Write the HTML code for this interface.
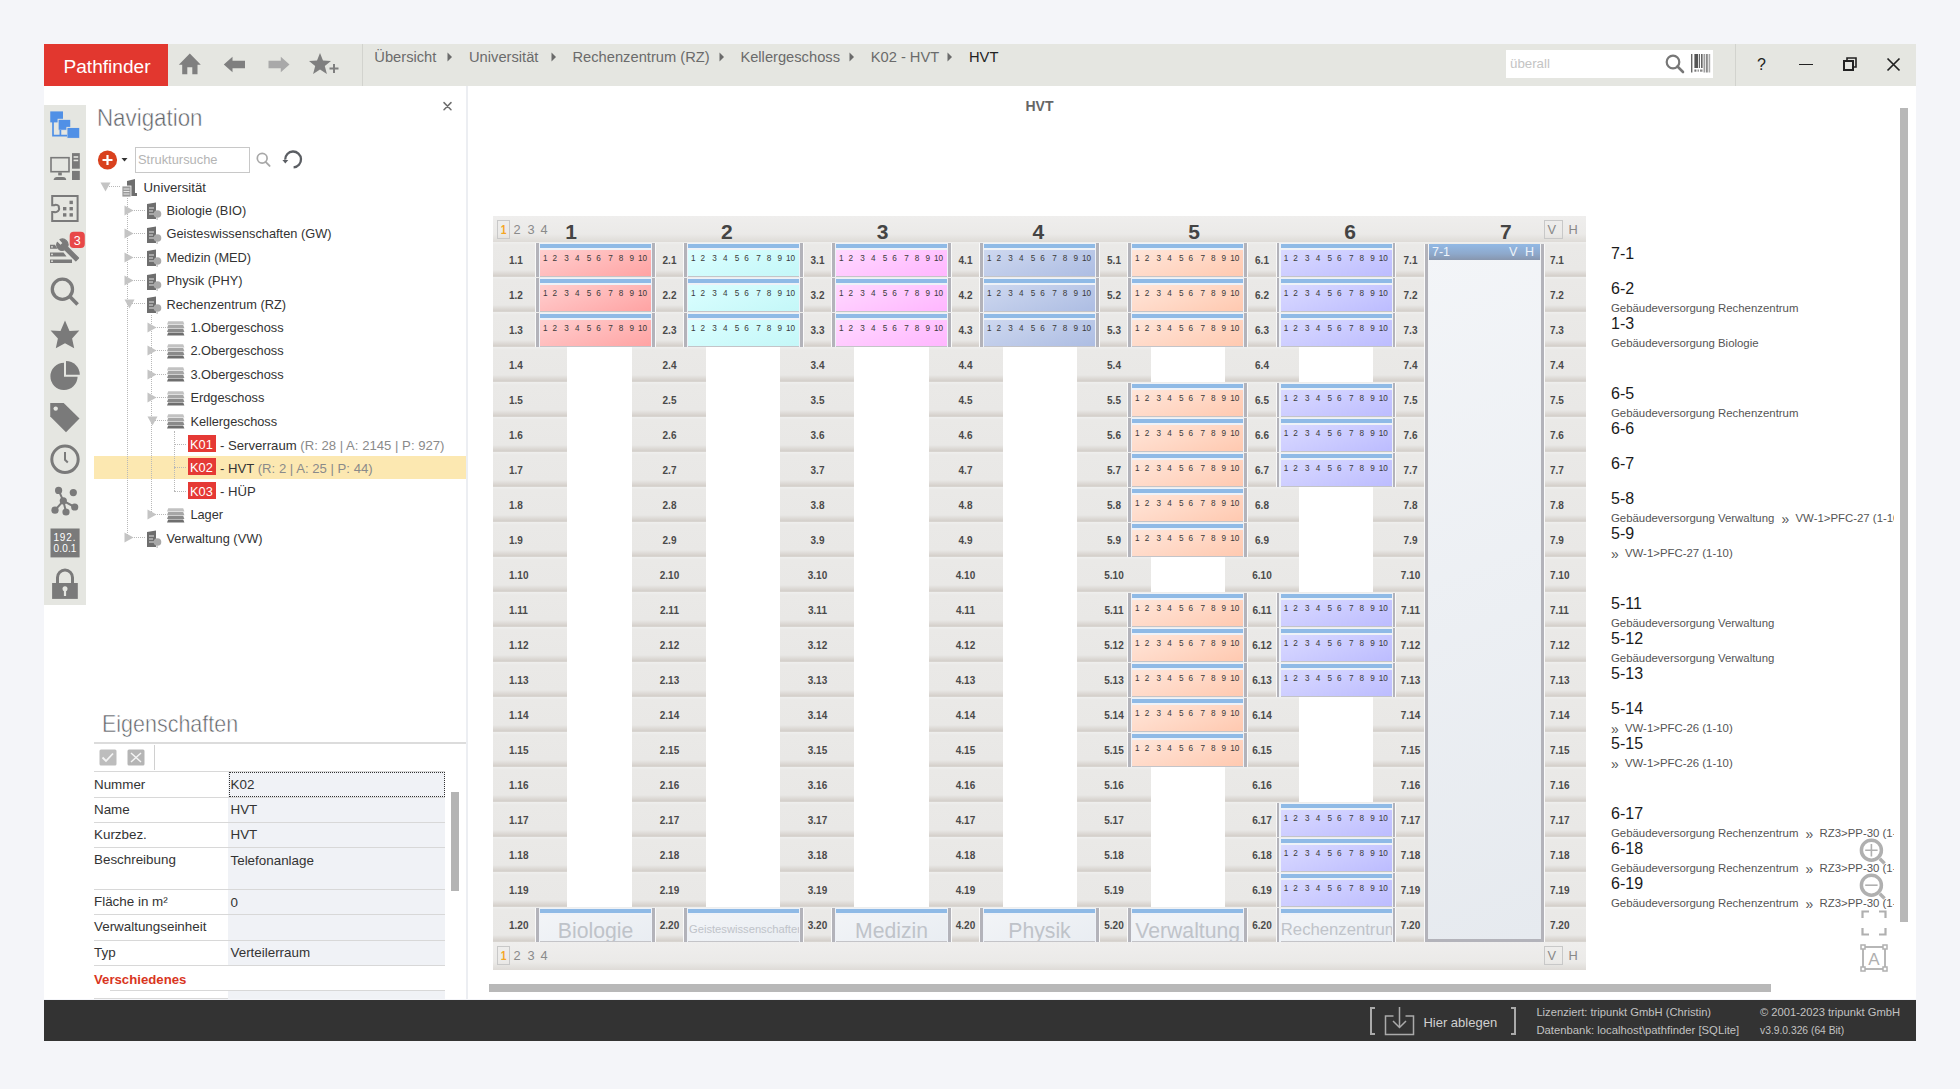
<!DOCTYPE html><html><head><meta charset="utf-8"><title>Pathfinder</title><style>
*{box-sizing:border-box;margin:0;padding:0}
html,body{width:1960px;height:1089px;overflow:hidden;background:#f4f5f9;font-family:"Liberation Sans",sans-serif;color:#333}
.a{position:absolute}
.t{position:absolute;white-space:nowrap;line-height:1}
.row{position:absolute;left:493px;width:1093px;height:35px;background:linear-gradient(#efefee 0px,#eae9e7 3px,#e9e8e6 28px,#d4cfca 34px,#dcdad6 35px)}
.wh{position:absolute;height:35px;background:#fff}
.pn{position:absolute;width:119px;height:35px}
.pn .bg{position:absolute;left:2.5px;top:0.5px;width:113.5px;height:34.5px;background:#eef2f8}
.pn .lb{position:absolute;left:0;top:1px;width:2.5px;height:34px;background:#b3b3ba;box-shadow:-1px 0 0 #fafafa}
.pn .rb{position:absolute;left:116px;top:1px;width:2.5px;height:34px;background:#b3b3ba;box-shadow:1px 0 0 #fafafa}
.pn .bar{position:absolute;left:4px;top:2px;width:111px;height:4.2px;background:#8fbae6}
.pn .body{position:absolute;left:4px;top:7.5px;width:111px;height:27px;border-bottom:1px solid #c4c4c8}
.pn .n{position:absolute;top:13px;font-size:8.2px;line-height:1;color:#3a3a3a;width:10px;text-align:center;margin-left:-5px}
.lbl{position:absolute;font-size:10px;font-weight:bold;color:#4a4a4a;line-height:1;white-space:nowrap}
.rq{font-size:14px;position:relative;top:1.5px;margin:0 3px 0 4px;line-height:0}</style></head><body><div class="a" style="left:44px;top:44px;width:1872px;height:42px;background:#e5e6e1"></div><div class="a" style="left:44px;top:44px;width:124px;height:42px;background:#e2372f"></div><div class="t" style="left:63.5px;top:57px;font-size:19.1px;color:#fff">Pathfinder</div><div class="a" style="left:44px;top:86px;width:422px;height:913px;background:#fff"></div><div class="a" style="left:466px;top:86px;width:1450px;height:913px;background:#fff;border-left:2px solid #eceef2"></div><div class="a" style="left:44px;top:999.6px;width:1872px;height:41.6px;background:#333"></div><svg class="a" style="left:178px;top:53px" width="24" height="23" viewBox="0 0 24 23"><path d="M0.8 11.8 L11.8 0.6 L22.8 11.8 L19.5 11.8 L19.5 21.3 L14.3 21.3 L14.3 14.3 L9.3 14.3 L9.3 21.3 L4.2 21.3 L4.2 11.8 Z" fill="#7f7f7f"/></svg><svg class="a" style="left:223px;top:55px" width="24" height="18" viewBox="0 0 24 18"><path d="M0.8 9.5 L9.5 1.8 L9.5 5.8 L22 5.8 L22 13.2 L9.5 13.2 L9.5 17.2 Z" fill="#7f7f7f"/></svg><svg class="a" style="left:268px;top:55px" width="24" height="18" viewBox="0 0 24 18"><path d="M21.5 9.5 L12.8 1.8 L12.8 5.8 L0.5 5.8 L0.5 13.2 L12.8 13.2 L12.8 17.2 Z" fill="#a9a9a9"/></svg><svg class="a" style="left:309px;top:52px" width="32" height="24" viewBox="0 0 32 24"><path d="M11 1 L14 8.6 L22 9 L15.8 14.1 L17.9 22 L11 17.6 L4.1 22 L6.2 14.1 L0 9 L8 8.6 Z" fill="#7f7f7f"/><path d="M20.5 16.5 h9 M25 12 v9" stroke="#7f7f7f" stroke-width="2"/></svg><div class="a" style="left:362px;top:44px;width:1px;height:42px;background:#d2d3ce"></div><div class="t" style="left:374.3px;top:49.5px;font-size:14.7px;color:#6b6b6b">Übersicht</div><svg class="a" style="left:447px;top:52px" width="6" height="10"><path d="M0.5 0.5 L5 5 L0.5 9.5Z" fill="#6b6b6b"/></svg><div class="t" style="left:469px;top:49.5px;font-size:14.7px;color:#6b6b6b">Universität</div><svg class="a" style="left:551px;top:52px" width="6" height="10"><path d="M0.5 0.5 L5 5 L0.5 9.5Z" fill="#6b6b6b"/></svg><div class="t" style="left:572.5px;top:49.5px;font-size:14.7px;color:#6b6b6b">Rechenzentrum (RZ)</div><svg class="a" style="left:718.7px;top:52px" width="6" height="10"><path d="M0.5 0.5 L5 5 L0.5 9.5Z" fill="#6b6b6b"/></svg><div class="t" style="left:740.4px;top:49.5px;font-size:14.7px;color:#6b6b6b">Kellergeschoss</div><svg class="a" style="left:849px;top:52px" width="6" height="10"><path d="M0.5 0.5 L5 5 L0.5 9.5Z" fill="#6b6b6b"/></svg><div class="t" style="left:870.7px;top:49.5px;font-size:14.7px;color:#6b6b6b">K02 - HVT</div><svg class="a" style="left:947px;top:52px" width="6" height="10"><path d="M0.5 0.5 L5 5 L0.5 9.5Z" fill="#6b6b6b"/></svg><div class="t" style="left:969px;top:49.5px;font-size:14.7px;color:#222">HVT</div><div class="a" style="left:1506px;top:50px;width:207px;height:28px;background:#fff"></div><div class="t" style="left:1510px;top:57px;font-size:13.3px;color:#c4c4c4">überall</div><svg class="a" style="left:1665px;top:54px" width="22" height="20" viewBox="0 0 22 20"><circle cx="8" cy="8" r="6.3" fill="none" stroke="#777" stroke-width="2.2"/><path d="M12.5 12.5 L18 18" stroke="#777" stroke-width="2.6" stroke-linecap="round"/></svg><svg class="a" style="left:1690.8px;top:53.8px" width="20" height="19"><rect x="0" y="0" width="1.4" height="18.5" fill="#666"/><rect x="3.4" y="0" width="3.6" height="14" fill="#555"/><rect x="7.8" y="0" width="1.2" height="14" fill="#666"/><rect x="10" y="0" width="1.6" height="14" fill="#666"/><rect x="12.6" y="0" width="1.2" height="18.5" fill="#888"/><rect x="14.8" y="0" width="2" height="18.5" fill="#8a8a8a"/><rect x="17.6" y="0" width="1.6" height="18.5" fill="#aaa"/><rect x="3.4" y="15.5" width="2" height="2.2" fill="#777"/><rect x="6.5" y="15.5" width="1.5" height="2.2" fill="#999"/><rect x="9" y="15.5" width="2.5" height="2.2" fill="#888"/></svg><div class="a" style="left:1735px;top:44px;width:1px;height:42px;background:#d2d3ce"></div><div class="t" style="left:1757px;top:57px;font-size:16px;color:#222">?</div><div class="a" style="left:1799px;top:63.5px;width:14px;height:1.6px;background:#222"></div><svg class="a" style="left:1843px;top:57px" width="14" height="14" viewBox="0 0 14 14"><rect x="1" y="4" width="9" height="9" fill="none" stroke="#222" stroke-width="2"/><path d="M4 4 V1 H13 V10 H10" fill="none" stroke="#222" stroke-width="1.6"/></svg><svg class="a" style="left:1886px;top:57px" width="15" height="15" viewBox="0 0 15 15"><path d="M1.5 1.5 L13.5 13.5 M13.5 1.5 L1.5 13.5" stroke="#222" stroke-width="1.7"/></svg><div class="a" style="left:44px;top:105px;width:42px;height:500px;background:#e5e6e1"></div><svg class="a" style="left:44px;top:100px" width="44" height="510" viewBox="44 100 44 510"><rect x="50.25" y="111.4" width="12.75" height="11" fill="#5090e6"/><rect x="58.1" y="119.3" width="12.7" height="11" fill="#5090e6" stroke="#e5e6e1" stroke-width="1"/><rect x="66.9" y="127.4" width="12.9" height="11" fill="#5090e6" stroke="#e5e6e1" stroke-width="1"/><path d="M53 122 V135.7 H67 M60.4 130 V135.7" fill="none" stroke="#5090e6" stroke-width="1.7"/><rect x="51" y="157.7" width="18" height="14" fill="none" stroke="#7a7a7a" stroke-width="1.6"/><rect x="58.2" y="172.4" width="3.6" height="3" fill="#7a7a7a"/><path d="M53.6 180 Q54 177 57 177 H63 Q66 177 66.2 180Z" fill="#7a7a7a"/><rect x="72" y="153.1" width="7.8" height="15.6" fill="#7a7a7a"/><rect x="73.6" y="156.2" width="4.6" height="1.6" fill="#e5e6e1"/><rect x="73.6" y="159.6" width="4.6" height="1.6" fill="#e5e6e1"/><rect x="72" y="170.9" width="7.8" height="9.1" fill="#7a7a7a"/><path d="M52.2 205.3 V196 H77.6 V221 H52.2 V212 H54 A4 3.35 0 0 0 58.8 207.5 A3 2.2 0 0 0 54 205.3 Z" fill="none" stroke="#7a7a7a" stroke-width="2"/><rect x="69.5" y="200.7" width="3.4" height="3.4" fill="#7a7a7a"/><rect x="63" y="207" width="3.4" height="3.4" fill="#7a7a7a"/><rect x="69.5" y="207" width="3.4" height="3.4" fill="#7a7a7a"/><rect x="63" y="213.2" width="3.4" height="3.4" fill="#7a7a7a"/><rect x="69.5" y="213.2" width="3.4" height="3.4" fill="#7a7a7a"/><path d="M50 244.8 H55 L57.5 248.7 H50Z M50 252.4 H63.5 L66.5 256.4 H50Z M50 259.4 H72 V263 H50Z" fill="#7a7a7a"/><circle cx="52" cy="246.8" r=".9" fill="#e5e6e1"/><circle cx="52" cy="254.4" r=".9" fill="#e5e6e1"/><circle cx="52" cy="261.2" r=".9" fill="#e5e6e1"/><path d="M78.5 258 L67.5 247 A5.6 5.6 0 0 0 60 239.6 L63.2 243 L60.6 245.6 L57.3 242.4 A5.6 5.6 0 0 0 64.8 249.8 L75.8 260.8Z" fill="#7a7a7a" stroke="#7a7a7a" stroke-width="1.2" stroke-linejoin="round"/><rect x="69.7" y="231.8" width="15.1" height="16.2" rx="4" fill="#e84848"/><text x="77.2" y="244.5" font-size="12.5" text-anchor="middle" fill="#fff" font-family="Liberation Sans">3</text><circle cx="62.4" cy="289.3" r="10.1" fill="none" stroke="#7a7a7a" stroke-width="3.3"/><path d="M69.8 296.6 L77.6 304.6" stroke="#7a7a7a" stroke-width="3.6"/><path d="M65 320.6 L69.5 331 L79.3 330.5 L72.1 338.5 L74.2 348.3 L65 343.3 L55.8 348.3 L57.9 338.5 L50.6 330.5 L60.5 331Z" fill="#7a7a7a"/><path d="M64 362.8 A13.6 13.6 0 1 0 77.6 376.8 L64 376.8Z" fill="#7a7a7a"/><path d="M66 361 A13.8 13.8 0 0 1 79.8 374.8 L66 374.8Z" fill="#7a7a7a"/><path d="M50.25 403 H63.7 L79.5 418.6 L66 432.2 L50.25 416.6Z" fill="#7a7a7a"/><circle cx="55.7" cy="408.6" r="2.2" fill="#e5e6e1"/><circle cx="65" cy="459.3" r="13.2" fill="none" stroke="#7a7a7a" stroke-width="3"/><path d="M65 452 V459.8 L67.8 462.5" fill="none" stroke="#7a7a7a" stroke-width="2"/><path d="M58.6 490.4 L63.3 500.8 L55 510.2 M63.3 500.8 L66 512 M63.3 500.8 L74.7 507" fill="none" stroke="#7a7a7a" stroke-width="2"/><circle cx="58.6" cy="490.4" r="3.6" fill="#7a7a7a"/><circle cx="73.3" cy="492.6" r="3.6" fill="#7a7a7a"/><circle cx="63.3" cy="500.8" r="3.6" fill="#7a7a7a"/><circle cx="55" cy="510.2" r="3.6" fill="#7a7a7a"/><circle cx="66" cy="512" r="3.6" fill="#7a7a7a"/><circle cx="74.7" cy="507" r="3.6" fill="#7a7a7a"/><rect x="50.5" y="528.5" width="29.1" height="28.9" fill="#7a7a7a"/><text x="53.4" y="541" font-size="10" fill="#fff" font-family="Liberation Sans" letter-spacing="0.9">192.</text><text x="53.4" y="552.3" font-size="10" fill="#fff" font-family="Liberation Sans" letter-spacing="0.2">0.0.1</text><path d="M57.5 583.5 V577.5 A7.5 7.5 0 0 1 72.5 577.5 V583.5" fill="none" stroke="#7a7a7a" stroke-width="3"/><rect x="52.1" y="583" width="25.7" height="15.9" fill="#7a7a7a"/><circle cx="65" cy="588.8" r="2.5" fill="#e5e6e1"/><path d="M65 590 V596" stroke="#e5e6e1" stroke-width="2.2"/></svg><div class="t" style="left:97px;top:106.91px;font-size:23.5px;color:#5f6368;font-weight:normal;-webkit-text-stroke:0.5px #fff;transform:scaleX(.95);transform-origin:0 0">Navigation</div><svg class="a" style="left:440px;top:99px" width="15" height="15" viewBox="440 99 15 15"><path d="M444 102.6 L451 109.7 M451 102.6 L444 109.7" stroke="#6e6e6e" stroke-width="1.5" stroke-linecap="round"/></svg><svg class="a" style="left:97px;top:150px" width="34" height="21" viewBox="0 0 34 21"><circle cx="10.5" cy="10" r="9.6" fill="#d9411e"/><path d="M10.5 5 V15 M5.5 10 H15.5" stroke="#fff" stroke-width="2.2"/><path d="M24.5 8 L30.5 8 L27.5 11.5Z" fill="#333"/></svg><div class="a" style="left:135px;top:147px;width:115px;height:26px;border:1px solid #c8c8c8;background:#fff"></div><div class="t" style="left:138px;top:154.08px;font-size:12.9px;color:#b4b4b4;font-weight:normal;">Struktursuche</div><svg class="a" style="left:250px;top:145px" width="60" height="30" viewBox="250 145 60 30"><circle cx="262.2" cy="158.2" r="4.9" fill="none" stroke="#a8a8a8" stroke-width="1.7"/><path d="M265.6 161.8 L269.6 165.9" stroke="#a8a8a8" stroke-width="1.9" stroke-linecap="round"/><path d="M293.6 167.3 A7.9 7.9 0 1 0 285.2 159.6" fill="none" stroke="#5b5e63" stroke-width="2.3"/><path d="M282.4 160 L288.3 160 L285.3 163.6Z" fill="#5b5e63"/></svg><div class="a" style="left:94px;top:455.7px;width:372px;height:23px;background:#fce8b1"></div><div class="a" style="left:127px;top:198px;width:1px;height:339px;border-left:1px dotted #b8b8b8"></div><div class="a" style="left:151px;top:315px;width:1px;height:199px;border-left:1px dotted #b8b8b8"></div><div class="a" style="left:174px;top:431px;width:1px;height:60px;border-left:1px dotted #b8b8b8"></div><div class="a" style="left:104px;top:186.4px;width:16px;height:1px;border-top:1px dotted #b8b8b8"></div><svg class="a" style="left:100px;top:182.4px" width="11" height="10"><path d="M0.5 0.5 L10.5 0.5 L5.5 9.5Z" fill="#c4c4c4"/></svg><svg class="a" style="left:121px;top:177.9px" width="17" height="19" viewBox="0 0 17 19"><path d="M6 3 L14 1 V15 H16 V18 H6Z" fill="#6e6e6e"/><rect x="1" y="8" width="9" height="11" fill="#9a9a9a" stroke="#fff" stroke-width=".8"/><path d="M2.5 11 h6 M2.5 13.5 h6 M2.5 16 h6" stroke="#e8e8e8" stroke-width="1"/></svg><div class="t" style="left:143.6px;top:181.23px;font-size:13.2px;color:#333;font-weight:normal;">Universität</div><div class="a" style="left:128px;top:209.8px;width:17px;height:1px;border-top:1px dotted #b8b8b8"></div><svg class="a" style="left:124px;top:204.8px" width="10" height="11"><path d="M0.5 0.5 L9.5 5.5 L0.5 10.5Z" fill="#c4c4c4"/></svg><svg class="a" style="left:146px;top:202.3px" width="16" height="19" viewBox="0 0 16 19"><path d="M1 2 L10 0.5 V17 H1Z" fill="#6e6e6e"/><path d="M3 6 h5 M3 9 h4 M3 12 h5" stroke="#e0e0e0" stroke-width="1.2"/><circle cx="11.5" cy="12" r="3.8" fill="#a9a9a9"/><rect x="10.5" y="15" width="1.2" height="3" fill="#bbb"/></svg><div class="t" style="left:166.5px;top:204.96px;font-size:12.8px;color:#333;font-weight:normal;">Biologie (BIO)</div><div class="a" style="left:128px;top:233.2px;width:17px;height:1px;border-top:1px dotted #b8b8b8"></div><svg class="a" style="left:124px;top:228.2px" width="10" height="11"><path d="M0.5 0.5 L9.5 5.5 L0.5 10.5Z" fill="#c4c4c4"/></svg><svg class="a" style="left:146px;top:225.7px" width="16" height="19" viewBox="0 0 16 19"><path d="M1 2 L10 0.5 V17 H1Z" fill="#6e6e6e"/><path d="M3 6 h5 M3 9 h4 M3 12 h5" stroke="#e0e0e0" stroke-width="1.2"/><circle cx="11.5" cy="12" r="3.8" fill="#a9a9a9"/><rect x="10.5" y="15" width="1.2" height="3" fill="#bbb"/></svg><div class="t" style="left:166.5px;top:228.36px;font-size:12.8px;color:#333;font-weight:normal;">Geisteswissenschaften (GW)</div><div class="a" style="left:128px;top:256.6px;width:17px;height:1px;border-top:1px dotted #b8b8b8"></div><svg class="a" style="left:124px;top:251.6px" width="10" height="11"><path d="M0.5 0.5 L9.5 5.5 L0.5 10.5Z" fill="#c4c4c4"/></svg><svg class="a" style="left:146px;top:249.1px" width="16" height="19" viewBox="0 0 16 19"><path d="M1 2 L10 0.5 V17 H1Z" fill="#6e6e6e"/><path d="M3 6 h5 M3 9 h4 M3 12 h5" stroke="#e0e0e0" stroke-width="1.2"/><circle cx="11.5" cy="12" r="3.8" fill="#a9a9a9"/><rect x="10.5" y="15" width="1.2" height="3" fill="#bbb"/></svg><div class="t" style="left:166.5px;top:251.76px;font-size:12.8px;color:#333;font-weight:normal;">Medizin (MED)</div><div class="a" style="left:128px;top:280.0px;width:17px;height:1px;border-top:1px dotted #b8b8b8"></div><svg class="a" style="left:124px;top:275.0px" width="10" height="11"><path d="M0.5 0.5 L9.5 5.5 L0.5 10.5Z" fill="#c4c4c4"/></svg><svg class="a" style="left:146px;top:272.5px" width="16" height="19" viewBox="0 0 16 19"><path d="M1 2 L10 0.5 V17 H1Z" fill="#6e6e6e"/><path d="M3 6 h5 M3 9 h4 M3 12 h5" stroke="#e0e0e0" stroke-width="1.2"/><circle cx="11.5" cy="12" r="3.8" fill="#a9a9a9"/><rect x="10.5" y="15" width="1.2" height="3" fill="#bbb"/></svg><div class="t" style="left:166.5px;top:275.16px;font-size:12.8px;color:#333;font-weight:normal;">Physik (PHY)</div><div class="a" style="left:128px;top:303.4px;width:17px;height:1px;border-top:1px dotted #b8b8b8"></div><svg class="a" style="left:124px;top:299.4px" width="11" height="10"><path d="M0.5 0.5 L10.5 0.5 L5.5 9.5Z" fill="#c4c4c4"/></svg><svg class="a" style="left:146px;top:295.9px" width="16" height="19" viewBox="0 0 16 19"><path d="M1 2 L10 0.5 V17 H1Z" fill="#6e6e6e"/><path d="M3 6 h5 M3 9 h4 M3 12 h5" stroke="#e0e0e0" stroke-width="1.2"/><circle cx="11.5" cy="12" r="3.8" fill="#a9a9a9"/><rect x="10.5" y="15" width="1.2" height="3" fill="#bbb"/></svg><div class="t" style="left:166.5px;top:298.56px;font-size:12.8px;color:#333;font-weight:normal;">Rechenzentrum (RZ)</div><div class="a" style="left:151px;top:326.8px;width:15px;height:1px;border-top:1px dotted #b8b8b8"></div><svg class="a" style="left:147px;top:321.8px" width="10" height="11"><path d="M0.5 0.5 L9.5 5.5 L0.5 10.5Z" fill="#c4c4c4"/></svg><svg class="a" style="left:167px;top:320.5px" width="18" height="16" viewBox="0 0 18 16"><path d="M1.2 0.3 H16.2 L17.4 3.5 H0 Z" fill="#c2c2c2"/><path d="M1.2 4.0 H16.2 L17.4 7.2 H0 Z" fill="#a6a6a6"/><path d="M1.2 7.7 H16.2 L17.4 10.9 H0 Z" fill="#8a8a8a"/><path d="M1.2 11.4 H16.2 L17.4 14.6 H0 Z" fill="#6e6e6e"/></svg><div class="t" style="left:190.4px;top:321.96px;font-size:12.8px;color:#333;font-weight:normal;">1.Obergeschoss</div><div class="a" style="left:151px;top:350.2px;width:15px;height:1px;border-top:1px dotted #b8b8b8"></div><svg class="a" style="left:147px;top:345.2px" width="10" height="11"><path d="M0.5 0.5 L9.5 5.5 L0.5 10.5Z" fill="#c4c4c4"/></svg><svg class="a" style="left:167px;top:343.9px" width="18" height="16" viewBox="0 0 18 16"><path d="M1.2 0.3 H16.2 L17.4 3.5 H0 Z" fill="#c2c2c2"/><path d="M1.2 4.0 H16.2 L17.4 7.2 H0 Z" fill="#a6a6a6"/><path d="M1.2 7.7 H16.2 L17.4 10.9 H0 Z" fill="#8a8a8a"/><path d="M1.2 11.4 H16.2 L17.4 14.6 H0 Z" fill="#6e6e6e"/></svg><div class="t" style="left:190.4px;top:345.36px;font-size:12.8px;color:#333;font-weight:normal;">2.Obergeschoss</div><div class="a" style="left:151px;top:373.6px;width:15px;height:1px;border-top:1px dotted #b8b8b8"></div><svg class="a" style="left:147px;top:368.6px" width="10" height="11"><path d="M0.5 0.5 L9.5 5.5 L0.5 10.5Z" fill="#c4c4c4"/></svg><svg class="a" style="left:167px;top:367.3px" width="18" height="16" viewBox="0 0 18 16"><path d="M1.2 0.3 H16.2 L17.4 3.5 H0 Z" fill="#c2c2c2"/><path d="M1.2 4.0 H16.2 L17.4 7.2 H0 Z" fill="#a6a6a6"/><path d="M1.2 7.7 H16.2 L17.4 10.9 H0 Z" fill="#8a8a8a"/><path d="M1.2 11.4 H16.2 L17.4 14.6 H0 Z" fill="#6e6e6e"/></svg><div class="t" style="left:190.4px;top:368.76px;font-size:12.8px;color:#333;font-weight:normal;">3.Obergeschoss</div><div class="a" style="left:151px;top:397.0px;width:15px;height:1px;border-top:1px dotted #b8b8b8"></div><svg class="a" style="left:147px;top:392.0px" width="10" height="11"><path d="M0.5 0.5 L9.5 5.5 L0.5 10.5Z" fill="#c4c4c4"/></svg><svg class="a" style="left:167px;top:390.7px" width="18" height="16" viewBox="0 0 18 16"><path d="M1.2 0.3 H16.2 L17.4 3.5 H0 Z" fill="#c2c2c2"/><path d="M1.2 4.0 H16.2 L17.4 7.2 H0 Z" fill="#a6a6a6"/><path d="M1.2 7.7 H16.2 L17.4 10.9 H0 Z" fill="#8a8a8a"/><path d="M1.2 11.4 H16.2 L17.4 14.6 H0 Z" fill="#6e6e6e"/></svg><div class="t" style="left:190.4px;top:392.16px;font-size:12.8px;color:#333;font-weight:normal;">Erdgeschoss</div><div class="a" style="left:151px;top:420.4px;width:15px;height:1px;border-top:1px dotted #b8b8b8"></div><svg class="a" style="left:147px;top:416.4px" width="11" height="10"><path d="M0.5 0.5 L10.5 0.5 L5.5 9.5Z" fill="#c4c4c4"/></svg><svg class="a" style="left:167px;top:414.1px" width="18" height="16" viewBox="0 0 18 16"><path d="M1.2 0.3 H16.2 L17.4 3.5 H0 Z" fill="#c2c2c2"/><path d="M1.2 4.0 H16.2 L17.4 7.2 H0 Z" fill="#a6a6a6"/><path d="M1.2 7.7 H16.2 L17.4 10.9 H0 Z" fill="#8a8a8a"/><path d="M1.2 11.4 H16.2 L17.4 14.6 H0 Z" fill="#6e6e6e"/></svg><div class="t" style="left:190.4px;top:415.56px;font-size:12.8px;color:#333;font-weight:normal;">Kellergeschoss</div><div class="a" style="left:174px;top:443.8px;width:12px;height:1px;border-top:1px dotted #b8b8b8"></div><div class="a" style="left:188px;top:434.8px;width:28px;height:17px;background:#e53935"></div><div class="t" style="left:190px;top:438.96px;font-size:12.8px;color:#fff;font-weight:normal;">K01</div><div class="a" style="left:174px;top:467.2px;width:12px;height:1px;border-top:1px dotted #b8b8b8"></div><div class="a" style="left:188px;top:458.2px;width:28px;height:17px;background:#e53935"></div><div class="t" style="left:190px;top:462.36px;font-size:12.8px;color:#fff;font-weight:normal;">K02</div><div class="a" style="left:174px;top:490.6px;width:12px;height:1px;border-top:1px dotted #b8b8b8"></div><div class="a" style="left:188px;top:481.6px;width:28px;height:17px;background:#e53935"></div><div class="t" style="left:190px;top:485.76px;font-size:12.8px;color:#fff;font-weight:normal;">K03</div><div class="a" style="left:151px;top:514.0px;width:15px;height:1px;border-top:1px dotted #b8b8b8"></div><svg class="a" style="left:147px;top:509.0px" width="10" height="11"><path d="M0.5 0.5 L9.5 5.5 L0.5 10.5Z" fill="#c4c4c4"/></svg><svg class="a" style="left:167px;top:507.7px" width="18" height="16" viewBox="0 0 18 16"><path d="M1.2 0.3 H16.2 L17.4 3.5 H0 Z" fill="#c2c2c2"/><path d="M1.2 4.0 H16.2 L17.4 7.2 H0 Z" fill="#a6a6a6"/><path d="M1.2 7.7 H16.2 L17.4 10.9 H0 Z" fill="#8a8a8a"/><path d="M1.2 11.4 H16.2 L17.4 14.6 H0 Z" fill="#6e6e6e"/></svg><div class="t" style="left:190.4px;top:509.16px;font-size:12.8px;color:#333;font-weight:normal;">Lager</div><div class="a" style="left:128px;top:537.4px;width:17px;height:1px;border-top:1px dotted #b8b8b8"></div><svg class="a" style="left:124px;top:532.4px" width="10" height="11"><path d="M0.5 0.5 L9.5 5.5 L0.5 10.5Z" fill="#c4c4c4"/></svg><svg class="a" style="left:146px;top:529.9px" width="16" height="19" viewBox="0 0 16 19"><path d="M1 2 L10 0.5 V17 H1Z" fill="#6e6e6e"/><path d="M3 6 h5 M3 9 h4 M3 12 h5" stroke="#e0e0e0" stroke-width="1.2"/><circle cx="11.5" cy="12" r="3.8" fill="#a9a9a9"/><rect x="10.5" y="15" width="1.2" height="3" fill="#bbb"/></svg><div class="t" style="left:166.5px;top:532.56px;font-size:12.8px;color:#333;font-weight:normal;">Verwaltung (VW)</div><div class="t" style="left:220px;top:438.67px;font-size:13.15px;color:#333;font-weight:normal;">- Serverraum <span style="color:#8a8a8a">(R: 28 | A: 2145 | P: 927)</span></div><div class="t" style="left:220px;top:462.07px;font-size:13.15px;color:#333;font-weight:normal;">- HVT <span style="color:#8a8a8a">(R: 2 | A: 25 | P: 44)</span></div><div class="t" style="left:220px;top:485.47px;font-size:13.15px;color:#333;font-weight:normal;">- HÜP</div><div class="t" style="left:102px;top:711.88px;font-size:24px;color:#5f6368;font-weight:normal;-webkit-text-stroke:0.55px #fff;transform:scaleX(.895);transform-origin:0 0">Eigenschaften</div><div class="a" style="left:94px;top:742px;width:372px;height:2px;background:#dcdcdc"></div><svg class="a" style="left:99px;top:749px" width="46" height="17" viewBox="0 0 46 17"><rect x="0.5" y="0.5" width="17" height="16" rx="1.5" fill="#bdbdbd"/><path d="M3.5 8.5 L7 12 L14 4.5" fill="none" stroke="#f4f4f4" stroke-width="1.8"/><rect x="28.5" y="0.5" width="17" height="16" rx="1.5" fill="#b5b5b5"/><path d="M32 4 L42 13 M42 4 L32 13" stroke="#f4f4f4" stroke-width="1.5"/></svg><div class="a" style="left:154px;top:745px;width:1px;height:25px;background:#d0d0d0"></div><div class="a" style="left:94px;top:771px;width:351px;height:1px;background:#d8d8d8"></div><div class="a" style="left:228px;top:772px;width:217px;height:25.0px;background:#f0f2f6"></div><div class="a" style="left:228px;top:797px;width:217px;height:25.0px;background:#f0f2f6"></div><div class="a" style="left:228px;top:822px;width:217px;height:25.5px;background:#f0f2f6"></div><div class="a" style="left:228px;top:847.5px;width:217px;height:41.9px;background:#f0f2f6"></div><div class="a" style="left:228px;top:889.4px;width:217px;height:25.1px;background:#f0f2f6"></div><div class="a" style="left:228px;top:914.5px;width:217px;height:25.5px;background:#f0f2f6"></div><div class="a" style="left:228px;top:940px;width:217px;height:25.4px;background:#f0f2f6"></div><div class="a" style="left:94px;top:796.5px;width:351px;height:1px;background:#d8d8d8"></div><div class="t" style="left:94px;top:777.86px;font-size:13.4px;color:#333;font-weight:normal;">Nummer</div><div class="t" style="left:230.5px;top:778.36px;font-size:13.4px;color:#333;font-weight:normal;">K02</div><div class="a" style="left:94px;top:821.5px;width:351px;height:1px;background:#d8d8d8"></div><div class="t" style="left:94px;top:802.86px;font-size:13.4px;color:#333;font-weight:normal;">Name</div><div class="t" style="left:230.5px;top:803.36px;font-size:13.4px;color:#333;font-weight:normal;">HVT</div><div class="a" style="left:94px;top:847.0px;width:351px;height:1px;background:#d8d8d8"></div><div class="t" style="left:94px;top:827.86px;font-size:13.4px;color:#333;font-weight:normal;">Kurzbez.</div><div class="t" style="left:230.5px;top:828.36px;font-size:13.4px;color:#333;font-weight:normal;">HVT</div><div class="a" style="left:94px;top:888.9px;width:351px;height:1px;background:#d8d8d8"></div><div class="t" style="left:94px;top:853.36px;font-size:13.4px;color:#333;font-weight:normal;">Beschreibung</div><div class="t" style="left:230.5px;top:853.86px;font-size:13.4px;color:#333;font-weight:normal;">Telefonanlage</div><div class="a" style="left:94px;top:914.0px;width:351px;height:1px;background:#d8d8d8"></div><div class="t" style="left:94px;top:895.26px;font-size:13.4px;color:#333;font-weight:normal;">Fläche in m²</div><div class="t" style="left:230.5px;top:895.76px;font-size:13.4px;color:#333;font-weight:normal;">0</div><div class="a" style="left:94px;top:939.5px;width:351px;height:1px;background:#d8d8d8"></div><div class="t" style="left:94px;top:920.36px;font-size:13.4px;color:#333;font-weight:normal;">Verwaltungseinheit</div><div class="a" style="left:94px;top:964.9px;width:351px;height:1px;background:#d8d8d8"></div><div class="t" style="left:94px;top:945.86px;font-size:13.4px;color:#333;font-weight:normal;">Typ</div><div class="t" style="left:230.5px;top:946.36px;font-size:13.4px;color:#333;font-weight:normal;">Verteilerraum</div><div class="a" style="left:229px;top:772px;width:216px;height:25px;border:1px dotted #333"></div><div class="t" style="left:94px;top:973.23px;font-size:13.2px;color:#d9361e;font-weight:bold;">Verschiedenes</div><div class="a" style="left:94px;top:998px;width:351px;height:1px;background:#d8d8d8"></div><div class="a" style="left:110px;top:990px;width:335px;height:1px;background:#d8d8d8"></div><div class="a" style="left:228px;top:991px;width:217px;height:8px;background:#f0f2f6"></div><div class="a" style="left:451px;top:792px;width:8px;height:99px;background:#b4b4b4"></div><div class="t" style="left:989.5px;width:100px;text-align:center;top:99.15px;font-size:14px;color:#666;font-weight:bold;">HVT</div><div class="a" style="left:493px;top:216px;width:1093px;height:26px;background:linear-gradient(#efeeed 0px,#ebeae8 18px,#dedbd7 26px)"></div><div class="a" style="left:497px;top:219.5px;width:13px;height:19px;border:1px solid #c8c8c8"></div><div class="t" style="left:499.5px;top:223.96px;font-size:12.8px;color:#f5a623;font-weight:bold;transform:scaleX(.8)">1</div><div class="t" style="left:513.5px;top:223.96px;font-size:12.8px;color:#8a8a8a;font-weight:normal;">2</div><div class="t" style="left:527.5px;top:223.96px;font-size:12.8px;color:#8a8a8a;font-weight:normal;">3</div><div class="t" style="left:540.5px;top:223.96px;font-size:12.8px;color:#8a8a8a;font-weight:normal;">4</div><div class="t" style="left:521.0px;width:100px;text-align:center;top:221.22px;font-size:21px;color:#444;font-weight:bold;">1</div><div class="t" style="left:676.8px;width:100px;text-align:center;top:221.22px;font-size:21px;color:#444;font-weight:bold;">2</div><div class="t" style="left:832.6px;width:100px;text-align:center;top:221.22px;font-size:21px;color:#444;font-weight:bold;">3</div><div class="t" style="left:988.4000000000001px;width:100px;text-align:center;top:221.22px;font-size:21px;color:#444;font-weight:bold;">4</div><div class="t" style="left:1144.2px;width:100px;text-align:center;top:221.22px;font-size:21px;color:#444;font-weight:bold;">5</div><div class="t" style="left:1300.0px;width:100px;text-align:center;top:221.22px;font-size:21px;color:#444;font-weight:bold;">6</div><div class="t" style="left:1455.8000000000002px;width:100px;text-align:center;top:221.22px;font-size:21px;color:#444;font-weight:bold;">7</div><div class="a" style="left:1544px;top:220px;width:18.5px;height:19px;border:1px solid #c8c8c8"></div><div class="t" style="left:1547.5px;top:223.96px;font-size:12.8px;color:#888;font-weight:normal;">V</div><div class="t" style="left:1568.5px;top:223.96px;font-size:12.8px;color:#888;font-weight:normal;">H</div><div class="a" style="left:493px;top:942px;width:1093px;height:28px;background:linear-gradient(#efeeed 0px,#ebeae8 20px,#dedbd7 28px)"></div><div class="a" style="left:497px;top:946px;width:13px;height:19px;border:1px solid #c8c8c8"></div><div class="t" style="left:499.5px;top:950.46px;font-size:12.8px;color:#f5a623;font-weight:bold;transform:scaleX(.8)">1</div><div class="t" style="left:513.5px;top:950.46px;font-size:12.8px;color:#8a8a8a;font-weight:normal;">2</div><div class="t" style="left:527.5px;top:950.46px;font-size:12.8px;color:#8a8a8a;font-weight:normal;">3</div><div class="t" style="left:540.5px;top:950.46px;font-size:12.8px;color:#8a8a8a;font-weight:normal;">4</div><div class="a" style="left:1544px;top:946px;width:18.5px;height:19px;border:1px solid #c8c8c8"></div><div class="t" style="left:1547.5px;top:950.46px;font-size:12.8px;color:#888;font-weight:normal;">V</div><div class="t" style="left:1568.5px;top:950.46px;font-size:12.8px;color:#888;font-weight:normal;">H</div><div class="row" style="top:242px"></div><div class="pn" style="left:536px;top:242px"><div class="bg"></div><div class="lb"></div><div class="rb"></div><div class="bar"></div><div class="body" style="background:linear-gradient(160deg,#ffcfcf,#ffa3a3)"></div><div class="n" style="left:9.2px">1</div><div class="n" style="left:18.8px">2</div><div class="n" style="left:30.5px">3</div><div class="n" style="left:41.3px">4</div><div class="n" style="left:53px">5</div><div class="n" style="left:62.5px">6</div><div class="n" style="left:74.5px">7</div><div class="n" style="left:85.1px">8</div><div class="n" style="left:95.7px">9</div><div class="n" style="left:106.5px">10</div></div><div class="pn" style="left:684px;top:242px"><div class="bg"></div><div class="lb"></div><div class="rb"></div><div class="bar"></div><div class="body" style="background:linear-gradient(160deg,#dbffff,#c4f7f8)"></div><div class="n" style="left:9.2px">1</div><div class="n" style="left:18.8px">2</div><div class="n" style="left:30.5px">3</div><div class="n" style="left:41.3px">4</div><div class="n" style="left:53px">5</div><div class="n" style="left:62.5px">6</div><div class="n" style="left:74.5px">7</div><div class="n" style="left:85.1px">8</div><div class="n" style="left:95.7px">9</div><div class="n" style="left:106.5px">10</div></div><div class="pn" style="left:832px;top:242px"><div class="bg"></div><div class="lb"></div><div class="rb"></div><div class="bar"></div><div class="body" style="background:linear-gradient(160deg,#ffd9ff,#ffb6ff)"></div><div class="n" style="left:9.2px">1</div><div class="n" style="left:18.8px">2</div><div class="n" style="left:30.5px">3</div><div class="n" style="left:41.3px">4</div><div class="n" style="left:53px">5</div><div class="n" style="left:62.5px">6</div><div class="n" style="left:74.5px">7</div><div class="n" style="left:85.1px">8</div><div class="n" style="left:95.7px">9</div><div class="n" style="left:106.5px">10</div></div><div class="pn" style="left:980px;top:242px"><div class="bg"></div><div class="lb"></div><div class="rb"></div><div class="bar"></div><div class="body" style="background:linear-gradient(160deg,#ced8ef,#adbde3)"></div><div class="n" style="left:9.2px">1</div><div class="n" style="left:18.8px">2</div><div class="n" style="left:30.5px">3</div><div class="n" style="left:41.3px">4</div><div class="n" style="left:53px">5</div><div class="n" style="left:62.5px">6</div><div class="n" style="left:74.5px">7</div><div class="n" style="left:85.1px">8</div><div class="n" style="left:95.7px">9</div><div class="n" style="left:106.5px">10</div></div><div class="pn" style="left:1128.2px;top:242px"><div class="bg"></div><div class="lb"></div><div class="rb"></div><div class="bar"></div><div class="body" style="background:linear-gradient(160deg,#ffe6da,#ffc9b0)"></div><div class="n" style="left:9.2px">1</div><div class="n" style="left:18.8px">2</div><div class="n" style="left:30.5px">3</div><div class="n" style="left:41.3px">4</div><div class="n" style="left:53px">5</div><div class="n" style="left:62.5px">6</div><div class="n" style="left:74.5px">7</div><div class="n" style="left:85.1px">8</div><div class="n" style="left:95.7px">9</div><div class="n" style="left:106.5px">10</div></div><div class="pn" style="left:1276.8px;top:242px"><div class="bg"></div><div class="lb"></div><div class="rb"></div><div class="bar"></div><div class="body" style="background:linear-gradient(160deg,#dadaff,#bcbcff)"></div><div class="n" style="left:9.2px">1</div><div class="n" style="left:18.8px">2</div><div class="n" style="left:30.5px">3</div><div class="n" style="left:41.3px">4</div><div class="n" style="left:53px">5</div><div class="n" style="left:62.5px">6</div><div class="n" style="left:74.5px">7</div><div class="n" style="left:85.1px">8</div><div class="n" style="left:95.7px">9</div><div class="n" style="left:106.5px">10</div></div><div class="lbl" style="left:509px;top:256.24px">1.1</div><div class="lbl" style="left:639.5px;width:60px;text-align:center;top:256.24px">2.1</div><div class="lbl" style="left:787.5px;width:60px;text-align:center;top:256.24px">3.1</div><div class="lbl" style="left:935.5px;width:60px;text-align:center;top:256.24px">4.1</div><div class="lbl" style="left:1084px;width:60px;text-align:center;top:256.24px">5.1</div><div class="lbl" style="left:1232px;width:60px;text-align:center;top:256.24px">6.1</div><div class="lbl" style="left:1380.5px;width:60px;text-align:center;top:256.24px">7.1</div><div class="lbl" style="left:1550px;top:256.24px">7.1</div><div class="row" style="top:277px"></div><div class="pn" style="left:536px;top:277px"><div class="bg"></div><div class="lb"></div><div class="rb"></div><div class="bar"></div><div class="body" style="background:linear-gradient(160deg,#ffcfcf,#ffa3a3)"></div><div class="n" style="left:9.2px">1</div><div class="n" style="left:18.8px">2</div><div class="n" style="left:30.5px">3</div><div class="n" style="left:41.3px">4</div><div class="n" style="left:53px">5</div><div class="n" style="left:62.5px">6</div><div class="n" style="left:74.5px">7</div><div class="n" style="left:85.1px">8</div><div class="n" style="left:95.7px">9</div><div class="n" style="left:106.5px">10</div></div><div class="pn" style="left:684px;top:277px"><div class="bg"></div><div class="lb"></div><div class="rb"></div><div class="bar"></div><div class="body" style="background:linear-gradient(160deg,#dbffff,#c4f7f8)"></div><div class="n" style="left:9.2px">1</div><div class="n" style="left:18.8px">2</div><div class="n" style="left:30.5px">3</div><div class="n" style="left:41.3px">4</div><div class="n" style="left:53px">5</div><div class="n" style="left:62.5px">6</div><div class="n" style="left:74.5px">7</div><div class="n" style="left:85.1px">8</div><div class="n" style="left:95.7px">9</div><div class="n" style="left:106.5px">10</div></div><div class="pn" style="left:832px;top:277px"><div class="bg"></div><div class="lb"></div><div class="rb"></div><div class="bar"></div><div class="body" style="background:linear-gradient(160deg,#ffd9ff,#ffb6ff)"></div><div class="n" style="left:9.2px">1</div><div class="n" style="left:18.8px">2</div><div class="n" style="left:30.5px">3</div><div class="n" style="left:41.3px">4</div><div class="n" style="left:53px">5</div><div class="n" style="left:62.5px">6</div><div class="n" style="left:74.5px">7</div><div class="n" style="left:85.1px">8</div><div class="n" style="left:95.7px">9</div><div class="n" style="left:106.5px">10</div></div><div class="pn" style="left:980px;top:277px"><div class="bg"></div><div class="lb"></div><div class="rb"></div><div class="bar"></div><div class="body" style="background:linear-gradient(160deg,#ced8ef,#adbde3)"></div><div class="n" style="left:9.2px">1</div><div class="n" style="left:18.8px">2</div><div class="n" style="left:30.5px">3</div><div class="n" style="left:41.3px">4</div><div class="n" style="left:53px">5</div><div class="n" style="left:62.5px">6</div><div class="n" style="left:74.5px">7</div><div class="n" style="left:85.1px">8</div><div class="n" style="left:95.7px">9</div><div class="n" style="left:106.5px">10</div></div><div class="pn" style="left:1128.2px;top:277px"><div class="bg"></div><div class="lb"></div><div class="rb"></div><div class="bar"></div><div class="body" style="background:linear-gradient(160deg,#ffe6da,#ffc9b0)"></div><div class="n" style="left:9.2px">1</div><div class="n" style="left:18.8px">2</div><div class="n" style="left:30.5px">3</div><div class="n" style="left:41.3px">4</div><div class="n" style="left:53px">5</div><div class="n" style="left:62.5px">6</div><div class="n" style="left:74.5px">7</div><div class="n" style="left:85.1px">8</div><div class="n" style="left:95.7px">9</div><div class="n" style="left:106.5px">10</div></div><div class="pn" style="left:1276.8px;top:277px"><div class="bg"></div><div class="lb"></div><div class="rb"></div><div class="bar"></div><div class="body" style="background:linear-gradient(160deg,#dadaff,#bcbcff)"></div><div class="n" style="left:9.2px">1</div><div class="n" style="left:18.8px">2</div><div class="n" style="left:30.5px">3</div><div class="n" style="left:41.3px">4</div><div class="n" style="left:53px">5</div><div class="n" style="left:62.5px">6</div><div class="n" style="left:74.5px">7</div><div class="n" style="left:85.1px">8</div><div class="n" style="left:95.7px">9</div><div class="n" style="left:106.5px">10</div></div><div class="lbl" style="left:509px;top:291.24px">1.2</div><div class="lbl" style="left:639.5px;width:60px;text-align:center;top:291.24px">2.2</div><div class="lbl" style="left:787.5px;width:60px;text-align:center;top:291.24px">3.2</div><div class="lbl" style="left:935.5px;width:60px;text-align:center;top:291.24px">4.2</div><div class="lbl" style="left:1084px;width:60px;text-align:center;top:291.24px">5.2</div><div class="lbl" style="left:1232px;width:60px;text-align:center;top:291.24px">6.2</div><div class="lbl" style="left:1380.5px;width:60px;text-align:center;top:291.24px">7.2</div><div class="lbl" style="left:1550px;top:291.24px">7.2</div><div class="row" style="top:312px"></div><div class="pn" style="left:536px;top:312px"><div class="bg"></div><div class="lb"></div><div class="rb"></div><div class="bar"></div><div class="body" style="background:linear-gradient(160deg,#ffcfcf,#ffa3a3)"></div><div class="n" style="left:9.2px">1</div><div class="n" style="left:18.8px">2</div><div class="n" style="left:30.5px">3</div><div class="n" style="left:41.3px">4</div><div class="n" style="left:53px">5</div><div class="n" style="left:62.5px">6</div><div class="n" style="left:74.5px">7</div><div class="n" style="left:85.1px">8</div><div class="n" style="left:95.7px">9</div><div class="n" style="left:106.5px">10</div></div><div class="pn" style="left:684px;top:312px"><div class="bg"></div><div class="lb"></div><div class="rb"></div><div class="bar"></div><div class="body" style="background:linear-gradient(160deg,#dbffff,#c4f7f8)"></div><div class="n" style="left:9.2px">1</div><div class="n" style="left:18.8px">2</div><div class="n" style="left:30.5px">3</div><div class="n" style="left:41.3px">4</div><div class="n" style="left:53px">5</div><div class="n" style="left:62.5px">6</div><div class="n" style="left:74.5px">7</div><div class="n" style="left:85.1px">8</div><div class="n" style="left:95.7px">9</div><div class="n" style="left:106.5px">10</div></div><div class="pn" style="left:832px;top:312px"><div class="bg"></div><div class="lb"></div><div class="rb"></div><div class="bar"></div><div class="body" style="background:linear-gradient(160deg,#ffd9ff,#ffb6ff)"></div><div class="n" style="left:9.2px">1</div><div class="n" style="left:18.8px">2</div><div class="n" style="left:30.5px">3</div><div class="n" style="left:41.3px">4</div><div class="n" style="left:53px">5</div><div class="n" style="left:62.5px">6</div><div class="n" style="left:74.5px">7</div><div class="n" style="left:85.1px">8</div><div class="n" style="left:95.7px">9</div><div class="n" style="left:106.5px">10</div></div><div class="pn" style="left:980px;top:312px"><div class="bg"></div><div class="lb"></div><div class="rb"></div><div class="bar"></div><div class="body" style="background:linear-gradient(160deg,#ced8ef,#adbde3)"></div><div class="n" style="left:9.2px">1</div><div class="n" style="left:18.8px">2</div><div class="n" style="left:30.5px">3</div><div class="n" style="left:41.3px">4</div><div class="n" style="left:53px">5</div><div class="n" style="left:62.5px">6</div><div class="n" style="left:74.5px">7</div><div class="n" style="left:85.1px">8</div><div class="n" style="left:95.7px">9</div><div class="n" style="left:106.5px">10</div></div><div class="pn" style="left:1128.2px;top:312px"><div class="bg"></div><div class="lb"></div><div class="rb"></div><div class="bar"></div><div class="body" style="background:linear-gradient(160deg,#ffe6da,#ffc9b0)"></div><div class="n" style="left:9.2px">1</div><div class="n" style="left:18.8px">2</div><div class="n" style="left:30.5px">3</div><div class="n" style="left:41.3px">4</div><div class="n" style="left:53px">5</div><div class="n" style="left:62.5px">6</div><div class="n" style="left:74.5px">7</div><div class="n" style="left:85.1px">8</div><div class="n" style="left:95.7px">9</div><div class="n" style="left:106.5px">10</div></div><div class="pn" style="left:1276.8px;top:312px"><div class="bg"></div><div class="lb"></div><div class="rb"></div><div class="bar"></div><div class="body" style="background:linear-gradient(160deg,#dadaff,#bcbcff)"></div><div class="n" style="left:9.2px">1</div><div class="n" style="left:18.8px">2</div><div class="n" style="left:30.5px">3</div><div class="n" style="left:41.3px">4</div><div class="n" style="left:53px">5</div><div class="n" style="left:62.5px">6</div><div class="n" style="left:74.5px">7</div><div class="n" style="left:85.1px">8</div><div class="n" style="left:95.7px">9</div><div class="n" style="left:106.5px">10</div></div><div class="lbl" style="left:509px;top:326.24px">1.3</div><div class="lbl" style="left:639.5px;width:60px;text-align:center;top:326.24px">2.3</div><div class="lbl" style="left:787.5px;width:60px;text-align:center;top:326.24px">3.3</div><div class="lbl" style="left:935.5px;width:60px;text-align:center;top:326.24px">4.3</div><div class="lbl" style="left:1084px;width:60px;text-align:center;top:326.24px">5.3</div><div class="lbl" style="left:1232px;width:60px;text-align:center;top:326.24px">6.3</div><div class="lbl" style="left:1380.5px;width:60px;text-align:center;top:326.24px">7.3</div><div class="lbl" style="left:1550px;top:326.24px">7.3</div><div class="row" style="top:347px"></div><div class="wh" style="left:567px;top:347px;width:65.2px"></div><div class="wh" style="left:706.0px;top:347px;width:74.4px"></div><div class="wh" style="left:854.25px;top:347px;width:74.4px"></div><div class="wh" style="left:1002.5px;top:347px;width:74.4px"></div><div class="wh" style="left:1150.75px;top:347px;width:74.4px"></div><div class="wh" style="left:1299.0px;top:347px;width:74.4px"></div><div class="lbl" style="left:509px;top:361.24px">1.4</div><div class="lbl" style="left:639.5px;width:60px;text-align:center;top:361.24px">2.4</div><div class="lbl" style="left:787.5px;width:60px;text-align:center;top:361.24px">3.4</div><div class="lbl" style="left:935.5px;width:60px;text-align:center;top:361.24px">4.4</div><div class="lbl" style="left:1084px;width:60px;text-align:center;top:361.24px">5.4</div><div class="lbl" style="left:1232px;width:60px;text-align:center;top:361.24px">6.4</div><div class="lbl" style="left:1380.5px;width:60px;text-align:center;top:361.24px">7.4</div><div class="lbl" style="left:1550px;top:361.24px">7.4</div><div class="row" style="top:382px"></div><div class="wh" style="left:567px;top:382px;width:65.2px"></div><div class="wh" style="left:706.0px;top:382px;width:74.4px"></div><div class="wh" style="left:854.25px;top:382px;width:74.4px"></div><div class="wh" style="left:1002.5px;top:382px;width:74.4px"></div><div class="pn" style="left:1128.2px;top:382px"><div class="bg"></div><div class="lb"></div><div class="rb"></div><div class="bar"></div><div class="body" style="background:linear-gradient(160deg,#ffe6da,#ffc9b0)"></div><div class="n" style="left:9.2px">1</div><div class="n" style="left:18.8px">2</div><div class="n" style="left:30.5px">3</div><div class="n" style="left:41.3px">4</div><div class="n" style="left:53px">5</div><div class="n" style="left:62.5px">6</div><div class="n" style="left:74.5px">7</div><div class="n" style="left:85.1px">8</div><div class="n" style="left:95.7px">9</div><div class="n" style="left:106.5px">10</div></div><div class="pn" style="left:1276.8px;top:382px"><div class="bg"></div><div class="lb"></div><div class="rb"></div><div class="bar"></div><div class="body" style="background:linear-gradient(160deg,#dadaff,#bcbcff)"></div><div class="n" style="left:9.2px">1</div><div class="n" style="left:18.8px">2</div><div class="n" style="left:30.5px">3</div><div class="n" style="left:41.3px">4</div><div class="n" style="left:53px">5</div><div class="n" style="left:62.5px">6</div><div class="n" style="left:74.5px">7</div><div class="n" style="left:85.1px">8</div><div class="n" style="left:95.7px">9</div><div class="n" style="left:106.5px">10</div></div><div class="lbl" style="left:509px;top:396.24px">1.5</div><div class="lbl" style="left:639.5px;width:60px;text-align:center;top:396.24px">2.5</div><div class="lbl" style="left:787.5px;width:60px;text-align:center;top:396.24px">3.5</div><div class="lbl" style="left:935.5px;width:60px;text-align:center;top:396.24px">4.5</div><div class="lbl" style="left:1084px;width:60px;text-align:center;top:396.24px">5.5</div><div class="lbl" style="left:1232px;width:60px;text-align:center;top:396.24px">6.5</div><div class="lbl" style="left:1380.5px;width:60px;text-align:center;top:396.24px">7.5</div><div class="lbl" style="left:1550px;top:396.24px">7.5</div><div class="row" style="top:417px"></div><div class="wh" style="left:567px;top:417px;width:65.2px"></div><div class="wh" style="left:706.0px;top:417px;width:74.4px"></div><div class="wh" style="left:854.25px;top:417px;width:74.4px"></div><div class="wh" style="left:1002.5px;top:417px;width:74.4px"></div><div class="pn" style="left:1128.2px;top:417px"><div class="bg"></div><div class="lb"></div><div class="rb"></div><div class="bar"></div><div class="body" style="background:linear-gradient(160deg,#ffe6da,#ffc9b0)"></div><div class="n" style="left:9.2px">1</div><div class="n" style="left:18.8px">2</div><div class="n" style="left:30.5px">3</div><div class="n" style="left:41.3px">4</div><div class="n" style="left:53px">5</div><div class="n" style="left:62.5px">6</div><div class="n" style="left:74.5px">7</div><div class="n" style="left:85.1px">8</div><div class="n" style="left:95.7px">9</div><div class="n" style="left:106.5px">10</div></div><div class="pn" style="left:1276.8px;top:417px"><div class="bg"></div><div class="lb"></div><div class="rb"></div><div class="bar"></div><div class="body" style="background:linear-gradient(160deg,#dadaff,#bcbcff)"></div><div class="n" style="left:9.2px">1</div><div class="n" style="left:18.8px">2</div><div class="n" style="left:30.5px">3</div><div class="n" style="left:41.3px">4</div><div class="n" style="left:53px">5</div><div class="n" style="left:62.5px">6</div><div class="n" style="left:74.5px">7</div><div class="n" style="left:85.1px">8</div><div class="n" style="left:95.7px">9</div><div class="n" style="left:106.5px">10</div></div><div class="lbl" style="left:509px;top:431.24px">1.6</div><div class="lbl" style="left:639.5px;width:60px;text-align:center;top:431.24px">2.6</div><div class="lbl" style="left:787.5px;width:60px;text-align:center;top:431.24px">3.6</div><div class="lbl" style="left:935.5px;width:60px;text-align:center;top:431.24px">4.6</div><div class="lbl" style="left:1084px;width:60px;text-align:center;top:431.24px">5.6</div><div class="lbl" style="left:1232px;width:60px;text-align:center;top:431.24px">6.6</div><div class="lbl" style="left:1380.5px;width:60px;text-align:center;top:431.24px">7.6</div><div class="lbl" style="left:1550px;top:431.24px">7.6</div><div class="row" style="top:452px"></div><div class="wh" style="left:567px;top:452px;width:65.2px"></div><div class="wh" style="left:706.0px;top:452px;width:74.4px"></div><div class="wh" style="left:854.25px;top:452px;width:74.4px"></div><div class="wh" style="left:1002.5px;top:452px;width:74.4px"></div><div class="pn" style="left:1128.2px;top:452px"><div class="bg"></div><div class="lb"></div><div class="rb"></div><div class="bar"></div><div class="body" style="background:linear-gradient(160deg,#ffe6da,#ffc9b0)"></div><div class="n" style="left:9.2px">1</div><div class="n" style="left:18.8px">2</div><div class="n" style="left:30.5px">3</div><div class="n" style="left:41.3px">4</div><div class="n" style="left:53px">5</div><div class="n" style="left:62.5px">6</div><div class="n" style="left:74.5px">7</div><div class="n" style="left:85.1px">8</div><div class="n" style="left:95.7px">9</div><div class="n" style="left:106.5px">10</div></div><div class="pn" style="left:1276.8px;top:452px"><div class="bg"></div><div class="lb"></div><div class="rb"></div><div class="bar"></div><div class="body" style="background:linear-gradient(160deg,#dadaff,#bcbcff)"></div><div class="n" style="left:9.2px">1</div><div class="n" style="left:18.8px">2</div><div class="n" style="left:30.5px">3</div><div class="n" style="left:41.3px">4</div><div class="n" style="left:53px">5</div><div class="n" style="left:62.5px">6</div><div class="n" style="left:74.5px">7</div><div class="n" style="left:85.1px">8</div><div class="n" style="left:95.7px">9</div><div class="n" style="left:106.5px">10</div></div><div class="lbl" style="left:509px;top:466.24px">1.7</div><div class="lbl" style="left:639.5px;width:60px;text-align:center;top:466.24px">2.7</div><div class="lbl" style="left:787.5px;width:60px;text-align:center;top:466.24px">3.7</div><div class="lbl" style="left:935.5px;width:60px;text-align:center;top:466.24px">4.7</div><div class="lbl" style="left:1084px;width:60px;text-align:center;top:466.24px">5.7</div><div class="lbl" style="left:1232px;width:60px;text-align:center;top:466.24px">6.7</div><div class="lbl" style="left:1380.5px;width:60px;text-align:center;top:466.24px">7.7</div><div class="lbl" style="left:1550px;top:466.24px">7.7</div><div class="row" style="top:487px"></div><div class="wh" style="left:567px;top:487px;width:65.2px"></div><div class="wh" style="left:706.0px;top:487px;width:74.4px"></div><div class="wh" style="left:854.25px;top:487px;width:74.4px"></div><div class="wh" style="left:1002.5px;top:487px;width:74.4px"></div><div class="pn" style="left:1128.2px;top:487px"><div class="bg"></div><div class="lb"></div><div class="rb"></div><div class="bar"></div><div class="body" style="background:linear-gradient(160deg,#ffe6da,#ffc9b0)"></div><div class="n" style="left:9.2px">1</div><div class="n" style="left:18.8px">2</div><div class="n" style="left:30.5px">3</div><div class="n" style="left:41.3px">4</div><div class="n" style="left:53px">5</div><div class="n" style="left:62.5px">6</div><div class="n" style="left:74.5px">7</div><div class="n" style="left:85.1px">8</div><div class="n" style="left:95.7px">9</div><div class="n" style="left:106.5px">10</div></div><div class="wh" style="left:1299.0px;top:487px;width:74.4px"></div><div class="lbl" style="left:509px;top:501.24px">1.8</div><div class="lbl" style="left:639.5px;width:60px;text-align:center;top:501.24px">2.8</div><div class="lbl" style="left:787.5px;width:60px;text-align:center;top:501.24px">3.8</div><div class="lbl" style="left:935.5px;width:60px;text-align:center;top:501.24px">4.8</div><div class="lbl" style="left:1084px;width:60px;text-align:center;top:501.24px">5.8</div><div class="lbl" style="left:1232px;width:60px;text-align:center;top:501.24px">6.8</div><div class="lbl" style="left:1380.5px;width:60px;text-align:center;top:501.24px">7.8</div><div class="lbl" style="left:1550px;top:501.24px">7.8</div><div class="row" style="top:522px"></div><div class="wh" style="left:567px;top:522px;width:65.2px"></div><div class="wh" style="left:706.0px;top:522px;width:74.4px"></div><div class="wh" style="left:854.25px;top:522px;width:74.4px"></div><div class="wh" style="left:1002.5px;top:522px;width:74.4px"></div><div class="pn" style="left:1128.2px;top:522px"><div class="bg"></div><div class="lb"></div><div class="rb"></div><div class="bar"></div><div class="body" style="background:linear-gradient(160deg,#ffe6da,#ffc9b0)"></div><div class="n" style="left:9.2px">1</div><div class="n" style="left:18.8px">2</div><div class="n" style="left:30.5px">3</div><div class="n" style="left:41.3px">4</div><div class="n" style="left:53px">5</div><div class="n" style="left:62.5px">6</div><div class="n" style="left:74.5px">7</div><div class="n" style="left:85.1px">8</div><div class="n" style="left:95.7px">9</div><div class="n" style="left:106.5px">10</div></div><div class="wh" style="left:1299.0px;top:522px;width:74.4px"></div><div class="lbl" style="left:509px;top:536.24px">1.9</div><div class="lbl" style="left:639.5px;width:60px;text-align:center;top:536.24px">2.9</div><div class="lbl" style="left:787.5px;width:60px;text-align:center;top:536.24px">3.9</div><div class="lbl" style="left:935.5px;width:60px;text-align:center;top:536.24px">4.9</div><div class="lbl" style="left:1084px;width:60px;text-align:center;top:536.24px">5.9</div><div class="lbl" style="left:1232px;width:60px;text-align:center;top:536.24px">6.9</div><div class="lbl" style="left:1380.5px;width:60px;text-align:center;top:536.24px">7.9</div><div class="lbl" style="left:1550px;top:536.24px">7.9</div><div class="row" style="top:557px"></div><div class="wh" style="left:567px;top:557px;width:65.2px"></div><div class="wh" style="left:706.0px;top:557px;width:74.4px"></div><div class="wh" style="left:854.25px;top:557px;width:74.4px"></div><div class="wh" style="left:1002.5px;top:557px;width:74.4px"></div><div class="wh" style="left:1150.75px;top:557px;width:74.4px"></div><div class="wh" style="left:1299.0px;top:557px;width:74.4px"></div><div class="lbl" style="left:509px;top:571.24px">1.10</div><div class="lbl" style="left:639.5px;width:60px;text-align:center;top:571.24px">2.10</div><div class="lbl" style="left:787.5px;width:60px;text-align:center;top:571.24px">3.10</div><div class="lbl" style="left:935.5px;width:60px;text-align:center;top:571.24px">4.10</div><div class="lbl" style="left:1084px;width:60px;text-align:center;top:571.24px">5.10</div><div class="lbl" style="left:1232px;width:60px;text-align:center;top:571.24px">6.10</div><div class="lbl" style="left:1380.5px;width:60px;text-align:center;top:571.24px">7.10</div><div class="lbl" style="left:1550px;top:571.24px">7.10</div><div class="row" style="top:592px"></div><div class="wh" style="left:567px;top:592px;width:65.2px"></div><div class="wh" style="left:706.0px;top:592px;width:74.4px"></div><div class="wh" style="left:854.25px;top:592px;width:74.4px"></div><div class="wh" style="left:1002.5px;top:592px;width:74.4px"></div><div class="pn" style="left:1128.2px;top:592px"><div class="bg"></div><div class="lb"></div><div class="rb"></div><div class="bar"></div><div class="body" style="background:linear-gradient(160deg,#ffe6da,#ffc9b0)"></div><div class="n" style="left:9.2px">1</div><div class="n" style="left:18.8px">2</div><div class="n" style="left:30.5px">3</div><div class="n" style="left:41.3px">4</div><div class="n" style="left:53px">5</div><div class="n" style="left:62.5px">6</div><div class="n" style="left:74.5px">7</div><div class="n" style="left:85.1px">8</div><div class="n" style="left:95.7px">9</div><div class="n" style="left:106.5px">10</div></div><div class="pn" style="left:1276.8px;top:592px"><div class="bg"></div><div class="lb"></div><div class="rb"></div><div class="bar"></div><div class="body" style="background:linear-gradient(160deg,#dadaff,#bcbcff)"></div><div class="n" style="left:9.2px">1</div><div class="n" style="left:18.8px">2</div><div class="n" style="left:30.5px">3</div><div class="n" style="left:41.3px">4</div><div class="n" style="left:53px">5</div><div class="n" style="left:62.5px">6</div><div class="n" style="left:74.5px">7</div><div class="n" style="left:85.1px">8</div><div class="n" style="left:95.7px">9</div><div class="n" style="left:106.5px">10</div></div><div class="lbl" style="left:509px;top:606.24px">1.11</div><div class="lbl" style="left:639.5px;width:60px;text-align:center;top:606.24px">2.11</div><div class="lbl" style="left:787.5px;width:60px;text-align:center;top:606.24px">3.11</div><div class="lbl" style="left:935.5px;width:60px;text-align:center;top:606.24px">4.11</div><div class="lbl" style="left:1084px;width:60px;text-align:center;top:606.24px">5.11</div><div class="lbl" style="left:1232px;width:60px;text-align:center;top:606.24px">6.11</div><div class="lbl" style="left:1380.5px;width:60px;text-align:center;top:606.24px">7.11</div><div class="lbl" style="left:1550px;top:606.24px">7.11</div><div class="row" style="top:627px"></div><div class="wh" style="left:567px;top:627px;width:65.2px"></div><div class="wh" style="left:706.0px;top:627px;width:74.4px"></div><div class="wh" style="left:854.25px;top:627px;width:74.4px"></div><div class="wh" style="left:1002.5px;top:627px;width:74.4px"></div><div class="pn" style="left:1128.2px;top:627px"><div class="bg"></div><div class="lb"></div><div class="rb"></div><div class="bar"></div><div class="body" style="background:linear-gradient(160deg,#ffe6da,#ffc9b0)"></div><div class="n" style="left:9.2px">1</div><div class="n" style="left:18.8px">2</div><div class="n" style="left:30.5px">3</div><div class="n" style="left:41.3px">4</div><div class="n" style="left:53px">5</div><div class="n" style="left:62.5px">6</div><div class="n" style="left:74.5px">7</div><div class="n" style="left:85.1px">8</div><div class="n" style="left:95.7px">9</div><div class="n" style="left:106.5px">10</div></div><div class="pn" style="left:1276.8px;top:627px"><div class="bg"></div><div class="lb"></div><div class="rb"></div><div class="bar"></div><div class="body" style="background:linear-gradient(160deg,#dadaff,#bcbcff)"></div><div class="n" style="left:9.2px">1</div><div class="n" style="left:18.8px">2</div><div class="n" style="left:30.5px">3</div><div class="n" style="left:41.3px">4</div><div class="n" style="left:53px">5</div><div class="n" style="left:62.5px">6</div><div class="n" style="left:74.5px">7</div><div class="n" style="left:85.1px">8</div><div class="n" style="left:95.7px">9</div><div class="n" style="left:106.5px">10</div></div><div class="lbl" style="left:509px;top:641.24px">1.12</div><div class="lbl" style="left:639.5px;width:60px;text-align:center;top:641.24px">2.12</div><div class="lbl" style="left:787.5px;width:60px;text-align:center;top:641.24px">3.12</div><div class="lbl" style="left:935.5px;width:60px;text-align:center;top:641.24px">4.12</div><div class="lbl" style="left:1084px;width:60px;text-align:center;top:641.24px">5.12</div><div class="lbl" style="left:1232px;width:60px;text-align:center;top:641.24px">6.12</div><div class="lbl" style="left:1380.5px;width:60px;text-align:center;top:641.24px">7.12</div><div class="lbl" style="left:1550px;top:641.24px">7.12</div><div class="row" style="top:662px"></div><div class="wh" style="left:567px;top:662px;width:65.2px"></div><div class="wh" style="left:706.0px;top:662px;width:74.4px"></div><div class="wh" style="left:854.25px;top:662px;width:74.4px"></div><div class="wh" style="left:1002.5px;top:662px;width:74.4px"></div><div class="pn" style="left:1128.2px;top:662px"><div class="bg"></div><div class="lb"></div><div class="rb"></div><div class="bar"></div><div class="body" style="background:linear-gradient(160deg,#ffe6da,#ffc9b0)"></div><div class="n" style="left:9.2px">1</div><div class="n" style="left:18.8px">2</div><div class="n" style="left:30.5px">3</div><div class="n" style="left:41.3px">4</div><div class="n" style="left:53px">5</div><div class="n" style="left:62.5px">6</div><div class="n" style="left:74.5px">7</div><div class="n" style="left:85.1px">8</div><div class="n" style="left:95.7px">9</div><div class="n" style="left:106.5px">10</div></div><div class="pn" style="left:1276.8px;top:662px"><div class="bg"></div><div class="lb"></div><div class="rb"></div><div class="bar"></div><div class="body" style="background:linear-gradient(160deg,#dadaff,#bcbcff)"></div><div class="n" style="left:9.2px">1</div><div class="n" style="left:18.8px">2</div><div class="n" style="left:30.5px">3</div><div class="n" style="left:41.3px">4</div><div class="n" style="left:53px">5</div><div class="n" style="left:62.5px">6</div><div class="n" style="left:74.5px">7</div><div class="n" style="left:85.1px">8</div><div class="n" style="left:95.7px">9</div><div class="n" style="left:106.5px">10</div></div><div class="lbl" style="left:509px;top:676.24px">1.13</div><div class="lbl" style="left:639.5px;width:60px;text-align:center;top:676.24px">2.13</div><div class="lbl" style="left:787.5px;width:60px;text-align:center;top:676.24px">3.13</div><div class="lbl" style="left:935.5px;width:60px;text-align:center;top:676.24px">4.13</div><div class="lbl" style="left:1084px;width:60px;text-align:center;top:676.24px">5.13</div><div class="lbl" style="left:1232px;width:60px;text-align:center;top:676.24px">6.13</div><div class="lbl" style="left:1380.5px;width:60px;text-align:center;top:676.24px">7.13</div><div class="lbl" style="left:1550px;top:676.24px">7.13</div><div class="row" style="top:697px"></div><div class="wh" style="left:567px;top:697px;width:65.2px"></div><div class="wh" style="left:706.0px;top:697px;width:74.4px"></div><div class="wh" style="left:854.25px;top:697px;width:74.4px"></div><div class="wh" style="left:1002.5px;top:697px;width:74.4px"></div><div class="pn" style="left:1128.2px;top:697px"><div class="bg"></div><div class="lb"></div><div class="rb"></div><div class="bar"></div><div class="body" style="background:linear-gradient(160deg,#ffe6da,#ffc9b0)"></div><div class="n" style="left:9.2px">1</div><div class="n" style="left:18.8px">2</div><div class="n" style="left:30.5px">3</div><div class="n" style="left:41.3px">4</div><div class="n" style="left:53px">5</div><div class="n" style="left:62.5px">6</div><div class="n" style="left:74.5px">7</div><div class="n" style="left:85.1px">8</div><div class="n" style="left:95.7px">9</div><div class="n" style="left:106.5px">10</div></div><div class="wh" style="left:1299.0px;top:697px;width:74.4px"></div><div class="lbl" style="left:509px;top:711.24px">1.14</div><div class="lbl" style="left:639.5px;width:60px;text-align:center;top:711.24px">2.14</div><div class="lbl" style="left:787.5px;width:60px;text-align:center;top:711.24px">3.14</div><div class="lbl" style="left:935.5px;width:60px;text-align:center;top:711.24px">4.14</div><div class="lbl" style="left:1084px;width:60px;text-align:center;top:711.24px">5.14</div><div class="lbl" style="left:1232px;width:60px;text-align:center;top:711.24px">6.14</div><div class="lbl" style="left:1380.5px;width:60px;text-align:center;top:711.24px">7.14</div><div class="lbl" style="left:1550px;top:711.24px">7.14</div><div class="row" style="top:732px"></div><div class="wh" style="left:567px;top:732px;width:65.2px"></div><div class="wh" style="left:706.0px;top:732px;width:74.4px"></div><div class="wh" style="left:854.25px;top:732px;width:74.4px"></div><div class="wh" style="left:1002.5px;top:732px;width:74.4px"></div><div class="pn" style="left:1128.2px;top:732px"><div class="bg"></div><div class="lb"></div><div class="rb"></div><div class="bar"></div><div class="body" style="background:linear-gradient(160deg,#ffe6da,#ffc9b0)"></div><div class="n" style="left:9.2px">1</div><div class="n" style="left:18.8px">2</div><div class="n" style="left:30.5px">3</div><div class="n" style="left:41.3px">4</div><div class="n" style="left:53px">5</div><div class="n" style="left:62.5px">6</div><div class="n" style="left:74.5px">7</div><div class="n" style="left:85.1px">8</div><div class="n" style="left:95.7px">9</div><div class="n" style="left:106.5px">10</div></div><div class="wh" style="left:1299.0px;top:732px;width:74.4px"></div><div class="lbl" style="left:509px;top:746.24px">1.15</div><div class="lbl" style="left:639.5px;width:60px;text-align:center;top:746.24px">2.15</div><div class="lbl" style="left:787.5px;width:60px;text-align:center;top:746.24px">3.15</div><div class="lbl" style="left:935.5px;width:60px;text-align:center;top:746.24px">4.15</div><div class="lbl" style="left:1084px;width:60px;text-align:center;top:746.24px">5.15</div><div class="lbl" style="left:1232px;width:60px;text-align:center;top:746.24px">6.15</div><div class="lbl" style="left:1380.5px;width:60px;text-align:center;top:746.24px">7.15</div><div class="lbl" style="left:1550px;top:746.24px">7.15</div><div class="row" style="top:767px"></div><div class="wh" style="left:567px;top:767px;width:65.2px"></div><div class="wh" style="left:706.0px;top:767px;width:74.4px"></div><div class="wh" style="left:854.25px;top:767px;width:74.4px"></div><div class="wh" style="left:1002.5px;top:767px;width:74.4px"></div><div class="wh" style="left:1150.75px;top:767px;width:74.4px"></div><div class="wh" style="left:1299.0px;top:767px;width:74.4px"></div><div class="lbl" style="left:509px;top:781.24px">1.16</div><div class="lbl" style="left:639.5px;width:60px;text-align:center;top:781.24px">2.16</div><div class="lbl" style="left:787.5px;width:60px;text-align:center;top:781.24px">3.16</div><div class="lbl" style="left:935.5px;width:60px;text-align:center;top:781.24px">4.16</div><div class="lbl" style="left:1084px;width:60px;text-align:center;top:781.24px">5.16</div><div class="lbl" style="left:1232px;width:60px;text-align:center;top:781.24px">6.16</div><div class="lbl" style="left:1380.5px;width:60px;text-align:center;top:781.24px">7.16</div><div class="lbl" style="left:1550px;top:781.24px">7.16</div><div class="row" style="top:802px"></div><div class="wh" style="left:567px;top:802px;width:65.2px"></div><div class="wh" style="left:706.0px;top:802px;width:74.4px"></div><div class="wh" style="left:854.25px;top:802px;width:74.4px"></div><div class="wh" style="left:1002.5px;top:802px;width:74.4px"></div><div class="wh" style="left:1150.75px;top:802px;width:74.4px"></div><div class="pn" style="left:1276.8px;top:802px"><div class="bg"></div><div class="lb"></div><div class="rb"></div><div class="bar"></div><div class="body" style="background:linear-gradient(160deg,#dadaff,#bcbcff)"></div><div class="n" style="left:9.2px">1</div><div class="n" style="left:18.8px">2</div><div class="n" style="left:30.5px">3</div><div class="n" style="left:41.3px">4</div><div class="n" style="left:53px">5</div><div class="n" style="left:62.5px">6</div><div class="n" style="left:74.5px">7</div><div class="n" style="left:85.1px">8</div><div class="n" style="left:95.7px">9</div><div class="n" style="left:106.5px">10</div></div><div class="lbl" style="left:509px;top:816.24px">1.17</div><div class="lbl" style="left:639.5px;width:60px;text-align:center;top:816.24px">2.17</div><div class="lbl" style="left:787.5px;width:60px;text-align:center;top:816.24px">3.17</div><div class="lbl" style="left:935.5px;width:60px;text-align:center;top:816.24px">4.17</div><div class="lbl" style="left:1084px;width:60px;text-align:center;top:816.24px">5.17</div><div class="lbl" style="left:1232px;width:60px;text-align:center;top:816.24px">6.17</div><div class="lbl" style="left:1380.5px;width:60px;text-align:center;top:816.24px">7.17</div><div class="lbl" style="left:1550px;top:816.24px">7.17</div><div class="row" style="top:837px"></div><div class="wh" style="left:567px;top:837px;width:65.2px"></div><div class="wh" style="left:706.0px;top:837px;width:74.4px"></div><div class="wh" style="left:854.25px;top:837px;width:74.4px"></div><div class="wh" style="left:1002.5px;top:837px;width:74.4px"></div><div class="wh" style="left:1150.75px;top:837px;width:74.4px"></div><div class="pn" style="left:1276.8px;top:837px"><div class="bg"></div><div class="lb"></div><div class="rb"></div><div class="bar"></div><div class="body" style="background:linear-gradient(160deg,#dadaff,#bcbcff)"></div><div class="n" style="left:9.2px">1</div><div class="n" style="left:18.8px">2</div><div class="n" style="left:30.5px">3</div><div class="n" style="left:41.3px">4</div><div class="n" style="left:53px">5</div><div class="n" style="left:62.5px">6</div><div class="n" style="left:74.5px">7</div><div class="n" style="left:85.1px">8</div><div class="n" style="left:95.7px">9</div><div class="n" style="left:106.5px">10</div></div><div class="lbl" style="left:509px;top:851.24px">1.18</div><div class="lbl" style="left:639.5px;width:60px;text-align:center;top:851.24px">2.18</div><div class="lbl" style="left:787.5px;width:60px;text-align:center;top:851.24px">3.18</div><div class="lbl" style="left:935.5px;width:60px;text-align:center;top:851.24px">4.18</div><div class="lbl" style="left:1084px;width:60px;text-align:center;top:851.24px">5.18</div><div class="lbl" style="left:1232px;width:60px;text-align:center;top:851.24px">6.18</div><div class="lbl" style="left:1380.5px;width:60px;text-align:center;top:851.24px">7.18</div><div class="lbl" style="left:1550px;top:851.24px">7.18</div><div class="row" style="top:872px"></div><div class="wh" style="left:567px;top:872px;width:65.2px"></div><div class="wh" style="left:706.0px;top:872px;width:74.4px"></div><div class="wh" style="left:854.25px;top:872px;width:74.4px"></div><div class="wh" style="left:1002.5px;top:872px;width:74.4px"></div><div class="wh" style="left:1150.75px;top:872px;width:74.4px"></div><div class="pn" style="left:1276.8px;top:872px"><div class="bg"></div><div class="lb"></div><div class="rb"></div><div class="bar"></div><div class="body" style="background:linear-gradient(160deg,#dadaff,#bcbcff)"></div><div class="n" style="left:9.2px">1</div><div class="n" style="left:18.8px">2</div><div class="n" style="left:30.5px">3</div><div class="n" style="left:41.3px">4</div><div class="n" style="left:53px">5</div><div class="n" style="left:62.5px">6</div><div class="n" style="left:74.5px">7</div><div class="n" style="left:85.1px">8</div><div class="n" style="left:95.7px">9</div><div class="n" style="left:106.5px">10</div></div><div class="lbl" style="left:509px;top:886.24px">1.19</div><div class="lbl" style="left:639.5px;width:60px;text-align:center;top:886.24px">2.19</div><div class="lbl" style="left:787.5px;width:60px;text-align:center;top:886.24px">3.19</div><div class="lbl" style="left:935.5px;width:60px;text-align:center;top:886.24px">4.19</div><div class="lbl" style="left:1084px;width:60px;text-align:center;top:886.24px">5.19</div><div class="lbl" style="left:1232px;width:60px;text-align:center;top:886.24px">6.19</div><div class="lbl" style="left:1380.5px;width:60px;text-align:center;top:886.24px">7.19</div><div class="lbl" style="left:1550px;top:886.24px">7.19</div><div class="row" style="top:907px"></div><div class="pn" style="left:536px;top:907px"><div class="bg"></div><div class="lb"></div><div class="rb"></div><div class="bar"></div><div class="body" style="background:linear-gradient(160deg,#f2f4f7,#e9edf2);overflow:hidden"><div class="t" style="left:0px;top:0;width:111px;text-align:center;line-height:32px;font-size:21.2px;color:#bfc3c9">Biologie</div></div></div><div class="pn" style="left:684px;top:907px"><div class="bg"></div><div class="lb"></div><div class="rb"></div><div class="bar"></div><div class="body" style="background:linear-gradient(160deg,#f2f4f7,#e9edf2);overflow:hidden"><div class="t" style="left:1px;top:0;width:111px;text-align:left;line-height:28px;font-size:11.2px;color:#bfc3c9">Geisteswissenschaften</div></div></div><div class="pn" style="left:832px;top:907px"><div class="bg"></div><div class="lb"></div><div class="rb"></div><div class="bar"></div><div class="body" style="background:linear-gradient(160deg,#f2f4f7,#e9edf2);overflow:hidden"><div class="t" style="left:0px;top:0;width:111px;text-align:center;line-height:32px;font-size:21.2px;color:#bfc3c9">Medizin</div></div></div><div class="pn" style="left:980px;top:907px"><div class="bg"></div><div class="lb"></div><div class="rb"></div><div class="bar"></div><div class="body" style="background:linear-gradient(160deg,#f2f4f7,#e9edf2);overflow:hidden"><div class="t" style="left:0px;top:0;width:111px;text-align:center;line-height:32px;font-size:21.2px;color:#bfc3c9">Physik</div></div></div><div class="pn" style="left:1128.2px;top:907px"><div class="bg"></div><div class="lb"></div><div class="rb"></div><div class="bar"></div><div class="body" style="background:linear-gradient(160deg,#f2f4f7,#e9edf2);overflow:hidden"><div class="t" style="left:0px;top:0;width:111px;text-align:center;line-height:32px;font-size:21.2px;color:#bfc3c9">Verwaltung</div></div></div><div class="pn" style="left:1276.8px;top:907px"><div class="bg"></div><div class="lb"></div><div class="rb"></div><div class="bar"></div><div class="body" style="background:linear-gradient(160deg,#f2f4f7,#e9edf2);overflow:hidden"><div class="t" style="left:0px;top:0;width:111px;text-align:left;line-height:30px;font-size:16.7px;color:#bfc3c9">Rechenzentrum</div></div></div><div class="lbl" style="left:509px;top:921.24px">1.20</div><div class="lbl" style="left:639.5px;width:60px;text-align:center;top:921.24px">2.20</div><div class="lbl" style="left:787.5px;width:60px;text-align:center;top:921.24px">3.20</div><div class="lbl" style="left:935.5px;width:60px;text-align:center;top:921.24px">4.20</div><div class="lbl" style="left:1084px;width:60px;text-align:center;top:921.24px">5.20</div><div class="lbl" style="left:1232px;width:60px;text-align:center;top:921.24px">6.20</div><div class="lbl" style="left:1380.5px;width:60px;text-align:center;top:921.24px">7.20</div><div class="lbl" style="left:1550px;top:921.24px">7.20</div><div class="a" style="left:1425px;top:243.7px;width:118.6px;height:698px;background:linear-gradient(160deg,#f3f5f8,#e6eaef);border:3px solid #b3b3ba;border-top:none;box-shadow:-1px 0 0 #fafafa,1px 0 0 #fafafa"></div><div class="a" style="left:1428.8px;top:243.8px;width:111px;height:16px;background:linear-gradient(#92b9e5,#8ea9cc 60%,#8796ae)"></div><div class="t" style="left:1432px;top:245.92px;font-size:12.5px;color:#eef4fb;font-weight:normal;">7-1</div><div class="t" style="left:1509px;top:245.92px;font-size:12.5px;color:#eef4fb;font-weight:normal;">V</div><div class="t" style="left:1525px;top:245.92px;font-size:12.5px;color:#eef4fb;font-weight:normal;">H</div><div class="a" style="left:1600px;top:240px;width:294px;height:700px;overflow:hidden"><div class="t" style="left:11px;top:6.06px;font-size:16px;color:#1a1a1a;font-weight:normal;">7-1</div><div class="t" style="left:11px;top:41.06px;font-size:16px;color:#1a1a1a;font-weight:normal;">6-2</div><div class="t" style="left:11px;top:63.35px;font-size:11.4px;color:#555;font-weight:normal;">Gebäudeversorgung Rechenzentrum</div><div class="t" style="left:11px;top:76.06px;font-size:16px;color:#1a1a1a;font-weight:normal;">1-3</div><div class="t" style="left:11px;top:98.35px;font-size:11.4px;color:#555;font-weight:normal;">Gebäudeversorgung Biologie</div><div class="t" style="left:11px;top:146.06px;font-size:16px;color:#1a1a1a;font-weight:normal;">6-5</div><div class="t" style="left:11px;top:168.35px;font-size:11.4px;color:#555;font-weight:normal;">Gebäudeversorgung Rechenzentrum</div><div class="t" style="left:11px;top:181.06px;font-size:16px;color:#1a1a1a;font-weight:normal;">6-6</div><div class="t" style="left:11px;top:216.06px;font-size:16px;color:#1a1a1a;font-weight:normal;">6-7</div><div class="t" style="left:11px;top:251.06px;font-size:16px;color:#1a1a1a;font-weight:normal;">5-8</div><div class="t" style="left:11px;top:273.35px;font-size:11.4px;color:#555;font-weight:normal;">Gebäudeversorgung Verwaltung <span class="rq">»</span> VW-1&gt;PFC-27 (1-10)</div><div class="t" style="left:11px;top:286.06px;font-size:16px;color:#1a1a1a;font-weight:normal;">5-9</div><div class="t" style="left:11px;top:308.35px;font-size:11.4px;color:#555;font-weight:normal;"><span class="rq" style="margin-left:0">»</span> VW-1&gt;PFC-27 (1-10)</div><div class="t" style="left:11px;top:356.06px;font-size:16px;color:#1a1a1a;font-weight:normal;">5-11</div><div class="t" style="left:11px;top:378.35px;font-size:11.4px;color:#555;font-weight:normal;">Gebäudeversorgung Verwaltung</div><div class="t" style="left:11px;top:391.06px;font-size:16px;color:#1a1a1a;font-weight:normal;">5-12</div><div class="t" style="left:11px;top:413.35px;font-size:11.4px;color:#555;font-weight:normal;">Gebäudeversorgung Verwaltung</div><div class="t" style="left:11px;top:426.06px;font-size:16px;color:#1a1a1a;font-weight:normal;">5-13</div><div class="t" style="left:11px;top:461.06px;font-size:16px;color:#1a1a1a;font-weight:normal;">5-14</div><div class="t" style="left:11px;top:483.35px;font-size:11.4px;color:#555;font-weight:normal;"><span class="rq" style="margin-left:0">»</span> VW-1&gt;PFC-26 (1-10)</div><div class="t" style="left:11px;top:496.06px;font-size:16px;color:#1a1a1a;font-weight:normal;">5-15</div><div class="t" style="left:11px;top:518.35px;font-size:11.4px;color:#555;font-weight:normal;"><span class="rq" style="margin-left:0">»</span> VW-1&gt;PFC-26 (1-10)</div><div class="t" style="left:11px;top:566.06px;font-size:16px;color:#1a1a1a;font-weight:normal;">6-17</div><div class="t" style="left:11px;top:588.35px;font-size:11.4px;color:#555;font-weight:normal;">Gebäudeversorgung Rechenzentrum <span class="rq">»</span> RZ3&gt;PP-30 (1-10)</div><div class="t" style="left:11px;top:601.06px;font-size:16px;color:#1a1a1a;font-weight:normal;">6-18</div><div class="t" style="left:11px;top:623.35px;font-size:11.4px;color:#555;font-weight:normal;">Gebäudeversorgung Rechenzentrum <span class="rq">»</span> RZ3&gt;PP-30 (1-10)</div><div class="t" style="left:11px;top:636.06px;font-size:16px;color:#1a1a1a;font-weight:normal;">6-19</div><div class="t" style="left:11px;top:658.35px;font-size:11.4px;color:#555;font-weight:normal;">Gebäudeversorgung Rechenzentrum <span class="rq">»</span> RZ3&gt;PP-30 (1-10)</div></div><svg class="a" style="left:1856px;top:835px" width="34" height="34" viewBox="1856 835 34 34"><circle cx="1871.4" cy="850.2" r="10" fill="none" stroke="#b0b0b0" stroke-width="3.5"/><path d="M1871.4 844 V856.4 M1865.2 850.2 H1877.6" stroke="#b0b0b0" stroke-width="1.6"/><path d="M1879.8 858.8 L1884.6 863.4" stroke="#b0b0b0" stroke-width="3.4"/></svg><svg class="a" style="left:1856px;top:870px" width="34" height="34" viewBox="1856 870 34 34"><circle cx="1871.4" cy="885.2" r="10" fill="none" stroke="#b0b0b0" stroke-width="3.5"/><path d="M1865.2 885.2 H1877.6" stroke="#b0b0b0" stroke-width="1.6"/><path d="M1879.8 893.8 L1884.6 898.4" stroke="#b0b0b0" stroke-width="3.4"/></svg><svg class="a" style="left:1861px;top:910px" width="26" height="26" viewBox="0 0 26 26"><path d="M1.5 8 V1.5 H8 M18 1.5 H24.5 V8 M24.5 18 V24.5 H18 M8 24.5 H1.5 V18" fill="none" stroke="#b0b0b0" stroke-width="2.2"/></svg><svg class="a" style="left:1860px;top:944px" width="28" height="28" viewBox="0 0 28 28"><rect x="3" y="3" width="22" height="22" fill="none" stroke="#b0b0b0" stroke-width="1.8"/><rect x="1" y="1" width="4" height="4" fill="#fff" stroke="#b0b0b0" stroke-width="1.5"/><rect x="23" y="1" width="4" height="4" fill="#fff" stroke="#b0b0b0" stroke-width="1.5"/><rect x="1" y="23" width="4" height="4" fill="#fff" stroke="#b0b0b0" stroke-width="1.5"/><rect x="23" y="23" width="4" height="4" fill="#fff" stroke="#b0b0b0" stroke-width="1.5"/><text x="14" y="21" font-size="17" text-anchor="middle" fill="#b0b0b0" font-family="Liberation Sans">A</text></svg><div class="a" style="left:1900px;top:108px;width:8px;height:814px;background:#b8b8b8"></div><div class="a" style="left:489px;top:984px;width:1282px;height:8px;background:#b8b8b8"></div><div class="a" style="left:1370px;top:1007px;width:5px;height:28px;border:2px solid #aaa;border-right:none"></div><div class="a" style="left:1511px;top:1007px;width:5px;height:28px;border:2px solid #aaa;border-left:none"></div><svg class="a" style="left:1384px;top:1006px" width="32" height="30" viewBox="0 0 32 30"><path d="M9.5 10 H1.5 V28.5 H29.5 V10 H21.5" fill="none" stroke="#aaa" stroke-width="1.5"/><path d="M15.5 1 V21 M9 15 L15.5 21.5 L22 15" fill="none" stroke="#aaa" stroke-width="1.5"/></svg><div class="t" style="left:1423.4px;top:1016.00px;font-size:13px;color:#d0d0d0;font-weight:normal;">Hier ablegen</div><div class="t" style="left:1536.4px;top:1007.02px;font-size:11.2px;color:#c2c2c2;font-weight:normal;">Lizenziert: tripunkt GmbH (Christin)</div><div class="t" style="left:1536.4px;top:1025.43px;font-size:11.3px;color:#c2c2c2;font-weight:normal;">Datenbank: localhost\pathfinder [SQLite]</div><div class="t" style="left:1760px;top:1007.02px;font-size:11.2px;color:#c2c2c2;font-weight:normal;">© 2001-2023 tripunkt GmbH</div><div class="t" style="left:1760px;top:1026.28px;font-size:10.3px;color:#c2c2c2;font-weight:normal;">v3.9.0.326 (64 Bit)</div></body></html>
